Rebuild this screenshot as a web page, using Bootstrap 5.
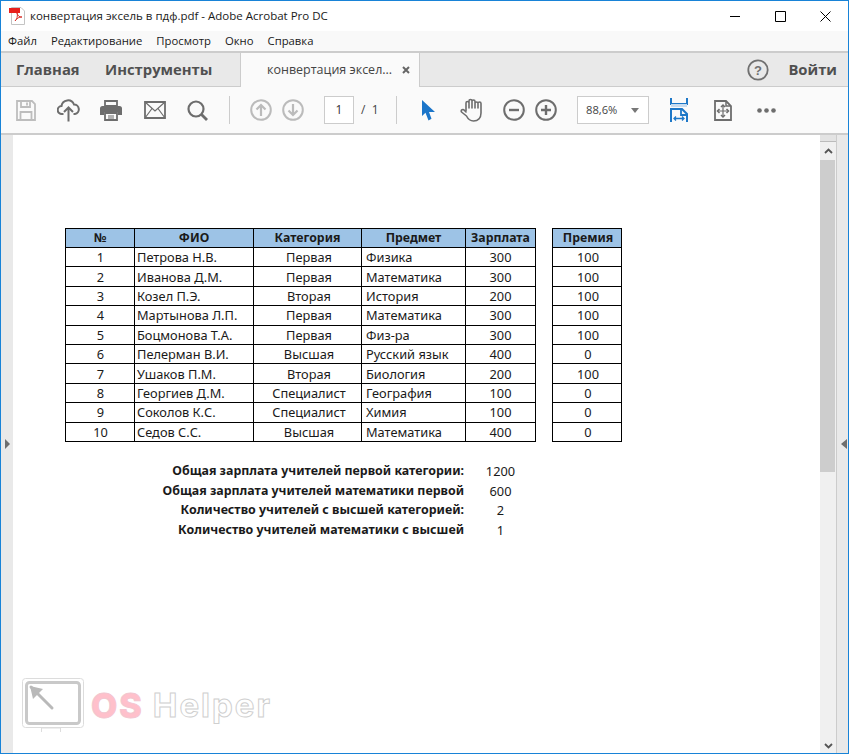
<!DOCTYPE html>
<html lang="ru"><head><meta charset="utf-8"><title>Acrobat</title>
<link href="https://cdn.jsdelivr.net/npm/bootstrap@5.3.0/dist/css/bootstrap.min.css" rel="stylesheet">
<style>
html,body{margin:0;height:754px;overflow:hidden;background:#fff}
body{font-family:"Open Sans","Noto Sans",sans-serif;color:#1a1a1a}
svg{display:block;flex:none}
.win{width:849px;height:754px;border:1px solid #1883d7}
.titlebar{height:30px;font-size:11.5px;padding-left:8px;flex:none}
.titlebar .doc-t{margin-left:4px}
.winbtns{margin-left:auto}
.wbtn{width:45px;height:30px}
.menubar{height:20px;background:#f9f9f9;font-size:11.3px;padding-left:7px;gap:14px;flex:none}
.menubar span{white-space:nowrap}
.tabbar{height:36px;background:#e9e9e9;border-top:2px solid #ccc;border-bottom:1px solid #ccc;color:#505050;font-size:14.8px;font-weight:700;flex:none}
.hometab{margin-left:15px;width:89px}
.tooltab{width:135px}
.activetab{width:180px;height:35px;background:#fafafa;border-left:1px solid #ccc;border-right:1px solid #ccc;font-weight:400;font-size:12.5px;padding-left:26px;margin-bottom:-1px;color:#444}
.activetab .xt{margin-left:8px}
.tabtitle{width:127px;white-space:nowrap;overflow:hidden}
.login{margin-left:auto;margin-right:11px}
.helpi{margin-right:19px}
.toolbar{height:48px;background:#fafafa;border-bottom:2px solid #ccc;padding-left:4px;flex:none}
.s42{width:42px}.s43{width:43px}.s44{width:44px}.s32{width:32px}.s22{width:22px}.s60{width:60px}.s28{width:28px}.s58{width:58px}
.s42,.s43,.s44,.s32,.s22,.s60,.s28,.s58{display:flex;justify-content:center;align-items:center;height:100%}
.ml5x{margin-left:5px}.ml15x{margin-left:15px}
.vline{width:1px;height:28px;background:#ccc}
.pagebox{width:30px;height:28px;border:1px solid #ccc;background:#fff;font-size:12px;color:#333}
.pagetot{width:31px;font-size:12px;color:#444;padding-left:7px;white-space:pre}
.zoombox{width:72px;height:28px;border:1px solid #ccc;background:#fff;font-size:11.2px;color:#444;padding:0 9px 0 8px}
.caret-d{width:0;height:0;border-left:4.5px solid transparent;border-right:4.5px solid transparent;border-top:5px solid #777}
.viewer{flex:1 1 auto;min-height:0}
.gutter{background:#e9e9e9;width:12px;flex:none}
.gutter-r{width:12px;border-left:1px solid #ccc}
.tri-l{width:0;height:0;border-top:5.5px solid transparent;border-bottom:5.5px solid transparent;border-right:6px solid #6e6e6e}
.tri-r{width:0;height:0;border-top:5.5px solid transparent;border-bottom:5.5px solid transparent;border-left:5px solid #6e6e6e}
.sheet{flex:1 1 auto;padding:93px 0 0 52px;background:#fff;min-width:0;font-family:"Noto Sans","Open Sans",sans-serif;font-size:12.8px;display:flex;flex-direction:column}
.sbar{width:16px;flex:none;background:#f0f0f0}
.sb-top{height:7px;background:#e3e3e3;border-bottom:1px solid #bbb}
.sb-up{height:18px;background:#f0f0f0}
.sb-thumb{height:312px;background:#cdcdcd;margin-right:1px}
.sb-rest{flex:1 1 auto}
.sb-dn{height:15px}
.xl{border-collapse:collapse;table-layout:fixed;line-height:1;margin:0;color:#1a1a1a}
.xl th,.xl td{border-left:1px solid #000;border-right:1px solid #000;border-bottom:1px solid #000;padding:1px 0 0;height:19.4px;text-align:center;vertical-align:middle;white-space:nowrap;overflow:hidden;font-weight:400}
.xl thead th{background:#9dc3e6;border-top:1px solid #000;font-weight:700;height:19px;font-size:12.3px}
.xl td.nm{text-align:left;padding-left:2px}
.xl td.sj{text-align:left;padding-left:4px}
.xl td.ct{padding-left:3px}
.xl td.no{padding-left:1px}
.xl-main{width:470px}
.xl-extra{width:70px;margin-left:16px}
.xl-extra td,.xl-extra thead th{padding-left:2px}
.sumgrid{margin-top:20px;display:grid;grid-template-columns:400px 70px;grid-auto-rows:19.5px;width:470px;align-items:center;font-size:12.42px}
.sumgrid .lab{text-align:right;font-weight:700;white-space:nowrap;padding-right:1px}
.sumgrid .val{text-align:center;font-size:12.8px;padding-left:1px}
.wmark{margin:auto 0 20px -43px;gap:6px}
.wm-os{font:800 34px/1 "Inter",sans-serif;color:#ffc0cb;-webkit-text-stroke:1px #f3c6cf;letter-spacing:2px}
.wm-h{font:700 33px/1 "Inter",sans-serif;color:#fff;-webkit-text-stroke:1px #cfcfcf;letter-spacing:2px;margin-left:3px}
</style></head><body>
<div class="win d-flex flex-column">
 <div class="titlebar d-flex align-items-center">
  <svg width="17" height="18" viewBox="0 0 17 18"><path d="M2.5 .5H12L15.5 4V17.5H2.5Z" fill="#fff" stroke="#c4c4c4"/><path d="M0 1H11V6H0Z" fill="#e8201c"/><path d="M6 14c2-1 3-6 2-8 1 3 2 4 5 4-3 0-5 1-7 4Z" fill="none" stroke="#d8352f"/></svg>
  <span class="doc-t text-nowrap">конвертация эксель в пдф.pdf - Adobe Acrobat Pro DC</span>
  <div class="winbtns d-flex">
   <div class="wbtn d-flex align-items-center justify-content-center"><svg width="11" height="11"><path d="M0 5.5H10" stroke="#000"/></svg></div>
   <div class="wbtn d-flex align-items-center justify-content-center"><svg width="11" height="11"><path d="M.5.5H10.5V10.5H.5Z" fill="none" stroke="#000"/></svg></div>
   <div class="wbtn d-flex align-items-center justify-content-center"><svg width="11" height="11"><path d="M.5.5L10.5 10.5M10.5.5L.5 10.5" stroke="#000"/></svg></div>
  </div>
 </div>
 <div class="menubar d-flex align-items-center"><span>Файл</span><span>Редактирование</span><span>Просмотр</span><span>Окно</span><span>Справка</span></div>
 <div class="tabbar d-flex align-items-center">
  <span class="hometab">Главная</span><span class="tooltab">Инструменты</span>
  <div class="activetab d-flex align-items-center"><span class="tabtitle">конвертация эксел...</span>
   <svg class="xt" width="8" height="8"><path d="M1 1L7 7M7 1L1 7" stroke="#666" stroke-width="2"/></svg></div>
  <svg class="login helpi" width="22" height="22" viewBox="0 0 22 22"><circle cx="11" cy="11" r="9.7" fill="none" stroke="#707070" stroke-width="1.8"/><text x="11" y="15.5" text-anchor="middle" font-family="Liberation Sans" font-weight="700" font-size="13" fill="#707070">?</text></svg>
  <span class="login ms-0">Войти</span>
 </div>
 <div class="toolbar d-flex align-items-center">
  <div class="s42"><svg width="20" height="21" viewBox="0 0 20 21" fill="none" stroke="#bdbdbd" stroke-width="1.8"><path d="M1 1H16L19 4V20H1Z"/><path d="M5 1V7H14V1M11 2.5V5.5"/><path d="M4.5 20V12H15.5V20"/></svg></div>
  <div class="s42"><svg width="23" height="24" viewBox="0 0 23 24" fill="none" stroke="#6d6d6d" stroke-width="2"><path d="M6.5 16H5a4 4 0 0 1-.5-8A6.5 6.5 0 0 1 17 6.5 4.8 4.8 0 0 1 18 16h-1.500"/><path d="M11.500 23.500V10M7 14l4.500-4.500L16 14"/></svg></div>
  <div class="s44"><svg width="22" height="21" viewBox="0 0 22 21"><path d="M5 1H17V6H5Z" fill="none" stroke="#6d6d6d" stroke-width="1.800"/><path d="M2.500 6H19.500Q22 6 22 8.500V15H18V12H4V15H0V8.500Q0 6 2.500 6Z" fill="#6d6d6d"/><path d="M5 13H17V20H5Z" fill="#fafafa" stroke="#6d6d6d" stroke-width="1.800"/><path d="M8 16H14M8 18H14" stroke="#6d6d6d"/></svg></div>
  <div class="s43"><svg width="22" height="18" viewBox="0 0 22 18" fill="none" stroke="#6d6d6d" stroke-width="1.800"><path d="M1 1H21V17H1Z"/><path d="M1 1L11 10L21 1M1 17L8 7.500M21 17L14 7.500" stroke-width="1.200"/></svg></div>
  <div class="s42"><svg width="21" height="21" viewBox="0 0 21 21" fill="none" stroke="#6d6d6d" stroke-width="2.200"><circle cx="9" cy="9" r="7.500"/><path d="M14.500 14.500L20 20" stroke-width="2.800"/></svg></div>
  <div class="s22"><div class="vline"></div></div>
  <div class="s32 ml5x"><svg width="22" height="22" viewBox="0 0 22 22" fill="none" stroke="#bbb" stroke-width="2"><circle cx="11" cy="11" r="9.800"/><path d="M11 17V6M6.500 10.500L11 6L15.500 10.500" stroke-width="2.200"/></svg></div>
  <div class="s32"><svg width="22" height="22" viewBox="0 0 22 22" fill="none" stroke="#bbb" stroke-width="2"><circle cx="11" cy="11" r="9.800"/><path d="M11 5V16M6.500 11.500L11 16L15.500 11.500" stroke-width="2.200"/></svg></div>
  <div class="pagebox ml15x d-flex align-items-center justify-content-center">1</div>
  <div class="pagetot">/  1</div>
  <div class="s22"><div class="vline"></div></div>
  <div class="s42"><svg width="13" height="21" viewBox="0 0 13 21"><path d="M0 0V16L3.500 12.800L6.500 20.500L9.500 18.800L7 12H13Z" fill="#1b75c9"/></svg></div>
  <div class="s44"><svg width="23" height="24" viewBox="0 0 23 24" fill="none" stroke="#6d6d6d" stroke-width="1.600" stroke-linecap="round" stroke-linejoin="round"><path d="M6 13V5a1.500 1.500 0 0 1 3 0V3a1.500 1.500 0 0 1 3 0V3.500a1.500 1.500 0 0 1 3 0V5.500a1.500 1.500 0 0 1 3 0a1.500 1.500 0 0 1 3 0V15c0 5-3 8-7.500 8-4 0-5.500-2-7-5L1.500 14c-1-2 1.500-3.500 3-1.500L6 14M9 4V10M12 3V10M15 4V10M18 6V10"/></svg></div>
  <div class="s32 ml5x"><svg width="22" height="22" viewBox="0 0 22 22" fill="none" stroke="#6d6d6d" stroke-width="2"><circle cx="11" cy="11" r="9.800"/><path d="M6 11H16" stroke-width="2.400"/></svg></div>
  <div class="s32"><svg width="22" height="22" viewBox="0 0 22 22" fill="none" stroke="#6d6d6d" stroke-width="2"><circle cx="11" cy="11" r="9.800"/><path d="M6 11H16M11 6V16" stroke-width="2.400"/></svg></div>
  <div class="zoombox ml15x d-flex align-items-center justify-content-between"><span>88,6%</span><span class="caret-d"></span></div>
  <div class="s60"><svg width="18" height="25" viewBox="0 0 18 25"><path d="M1 0V6H17V0" fill="none" stroke="#1e78c8" stroke-width="2"/><path d="M1 7.500H17" stroke="#c7dcf0" stroke-width="3"/><path d="M1 24V11H12L17 16V24" fill="none" stroke="#1e78c8" stroke-width="2"/><path d="M11 11V17H17" fill="none" stroke="#1e78c8" stroke-width="1.800"/><path d="M4 20.500H14M6 18.500L4 20.500L6 22.500M12 18.500L14 20.500L12 22.500" fill="none" stroke="#1e78c8" stroke-width="1.300"/></svg></div>
  <div class="s28"><svg width="18" height="21" viewBox="0 0 18 21" fill="none" stroke="#6d6d6d"><path d="M1 1H12L17 6V20H1Z" stroke-width="1.800"/><path d="M12 1V6H17" stroke-width="1.500"/><path d="M9 5V17M3.500 11H14.500" stroke-width="1.200"/><path d="M7 7L9 5L11 7M7 15L9 17L11 15M5.500 9L3.500 11L5.500 13M12.500 9L14.500 11L12.500 13" stroke-width="1.500"/></svg></div>
  <div class="s58"><svg width="19" height="5" viewBox="0 0 19 5" fill="#6d6d6d"><circle cx="2.500" cy="2.500" r="2.300"/><circle cx="9.500" cy="2.500" r="2.300"/><circle cx="16.500" cy="2.500" r="2.300"/></svg></div>
 </div>
 <div class="viewer d-flex">
  <div class="gutter d-flex align-items-center"><div class="tri-r ms-1"></div></div>
  <div class="sheet">
   <div class="d-flex">
    <table class="xl xl-main">
     <colgroup><col style="width:69px"><col style="width:119px"><col style="width:108px"><col style="width:104px"><col style="width:70px"></colgroup>
     <thead><tr><th>№</th><th>ФИО</th><th>Категория</th><th>Предмет</th><th>Зарплата</th></tr></thead>
     <tbody>
      <tr><td class="no">1</td><td class="nm">Петрова Н.В.</td><td class="ct">Первая</td><td class="sj">Физика</td><td>300</td></tr>
      <tr><td class="no">2</td><td class="nm">Иванова Д.М.</td><td class="ct">Первая</td><td class="sj">Математика</td><td>300</td></tr>
      <tr><td class="no">3</td><td class="nm">Козел П.Э.</td><td class="ct">Вторая</td><td class="sj">История</td><td>200</td></tr>
      <tr><td class="no">4</td><td class="nm">Мартынова Л.П.</td><td class="ct">Первая</td><td class="sj">Математика</td><td>300</td></tr>
      <tr><td class="no">5</td><td class="nm">Боцмонова Т.А.</td><td class="ct">Первая</td><td class="sj">Физ-ра</td><td>300</td></tr>
      <tr><td class="no">6</td><td class="nm">Пелерман В.И.</td><td class="ct">Высшая</td><td class="sj">Русский язык</td><td>400</td></tr>
      <tr><td class="no">7</td><td class="nm">Ушаков П.М.</td><td class="ct">Вторая</td><td class="sj">Биология</td><td>200</td></tr>
      <tr><td class="no">8</td><td class="nm">Георгиев Д.М.</td><td class="ct">Специалист</td><td class="sj">География</td><td>100</td></tr>
      <tr><td class="no">9</td><td class="nm">Соколов К.С.</td><td class="ct">Специалист</td><td class="sj">Химия</td><td>100</td></tr>
      <tr><td class="no">10</td><td class="nm">Седов С.С.</td><td class="ct">Высшая</td><td class="sj">Математика</td><td>400</td></tr>
     </tbody>
    </table>
    <table class="xl xl-extra">
     <thead><tr><th>Премия</th></tr></thead>
     <tbody><tr><td>100</td></tr><tr><td>100</td></tr><tr><td>100</td></tr><tr><td>100</td></tr><tr><td>100</td></tr><tr><td>0</td></tr><tr><td>100</td></tr><tr><td>0</td></tr><tr><td>0</td></tr><tr><td>0</td></tr></tbody>
    </table>
   </div>
   <div class="sumgrid">
    <div class="lab">Общая зарплата учителей первой категории:</div><div class="val">1200</div>
    <div class="lab">Общая зарплата учителей математики первой</div><div class="val">600</div>
    <div class="lab">Количество учителей с высшей категорией:</div><div class="val">2</div>
    <div class="lab">Количество учителей математики с высшей</div><div class="val">1</div>
   </div>
   <div class="wmark d-flex align-items-center">
    <svg width="63" height="55" viewBox="0 0 63 55" fill="none"><rect x=".5" y=".5" width="61" height="49" rx="3" stroke="#dcdcdc"/><rect x="4.500" y="4.500" width="53" height="41" rx="3" stroke="#c9c9c9" stroke-width="3"/><path d="M9 9L30 30" stroke="#b9b9b9" stroke-width="3" stroke-linecap="round"/><path d="M8 8L21 11L11 21Z" fill="#b9b9b9"/><path d="M19.500 54V50H38.500V54" stroke="#ddd"/></svg>
    <span class="wm-os">OS</span><span class="wm-h">Helper</span>
   </div>
  </div>
  <div class="sbar d-flex flex-column">
   <div class="sb-top"></div>
   <div class="sb-up d-flex align-items-center justify-content-center"><svg width="9" height="6"><path d="M1 5L4.500 1.500L8 5" fill="none" stroke="#555" stroke-width="1.800"/></svg></div>
   <div class="sb-thumb"></div>
   <div class="sb-rest"></div>
   <div class="sb-dn d-flex align-items-center justify-content-center"><svg width="9" height="6"><path d="M1 1L4.500 4.500L8 1" fill="none" stroke="#555" stroke-width="1.800"/></svg></div>
  </div>
  <div class="gutter gutter-r d-flex align-items-center"><div class="tri-l ms-1"></div></div>
 </div>
</div>
</body></html>
